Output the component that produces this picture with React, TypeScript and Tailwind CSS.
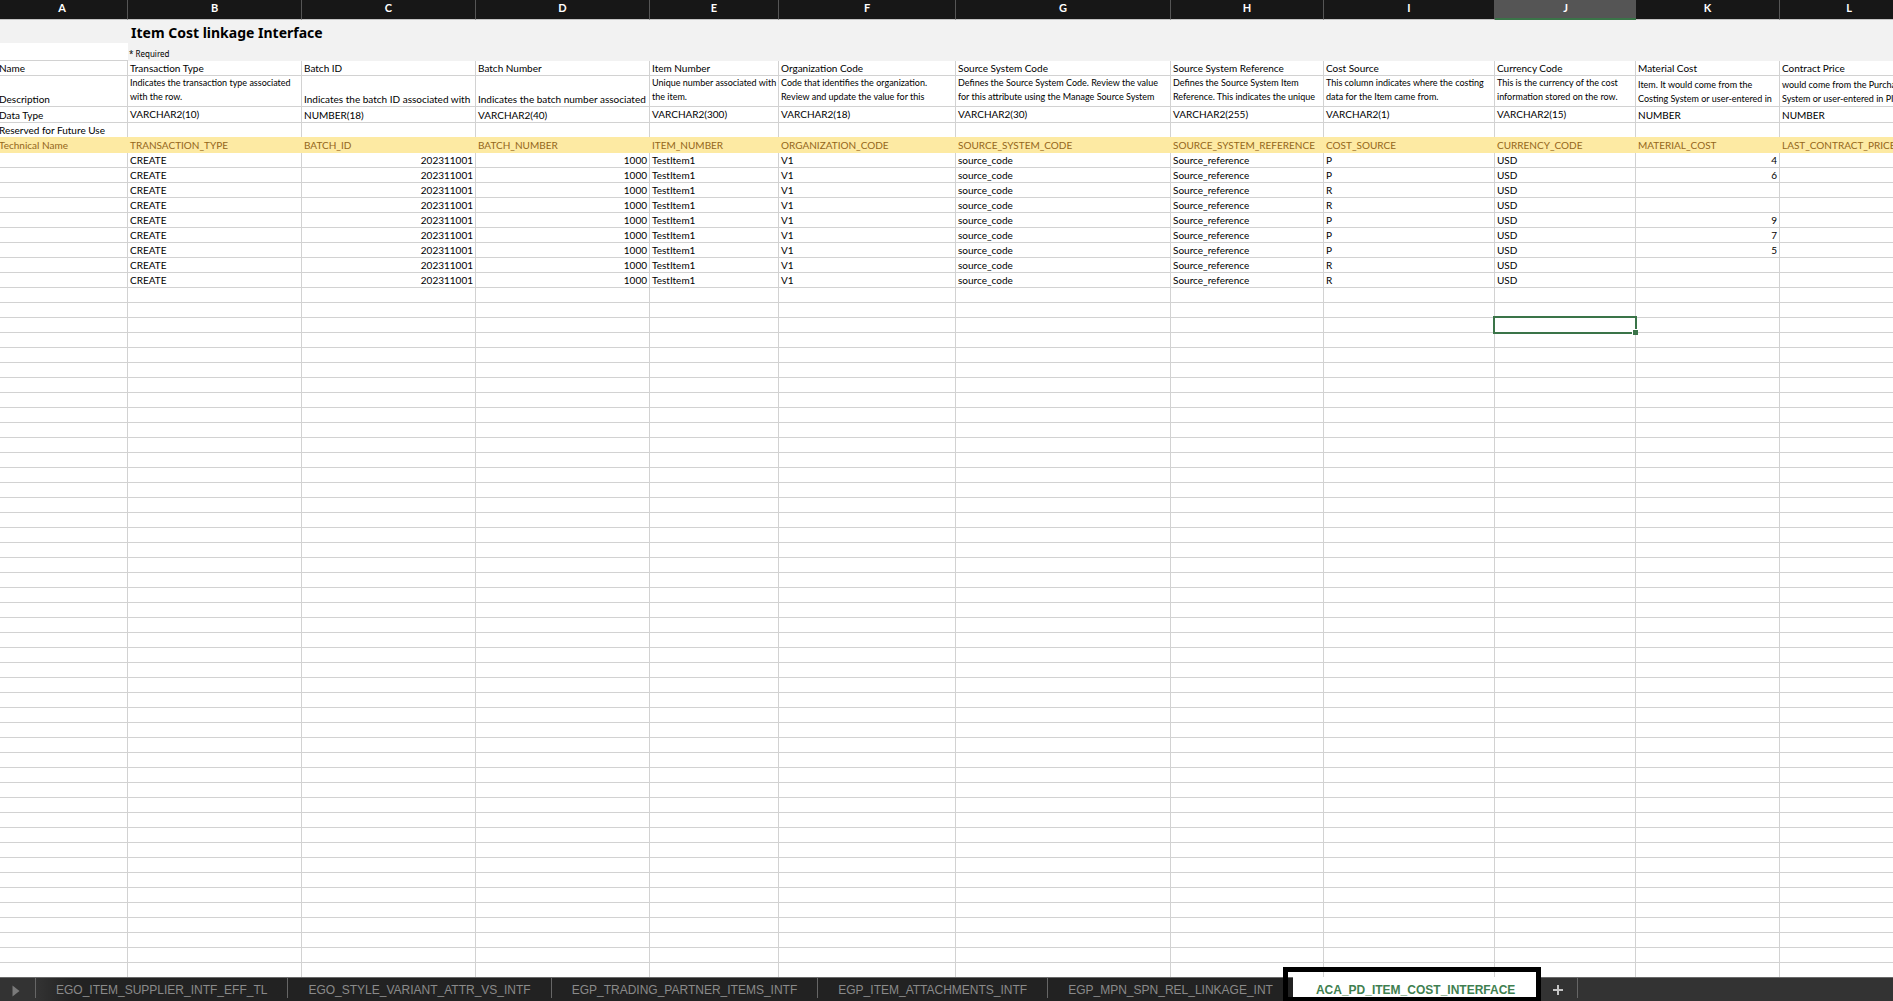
import React from 'react';
import clsx from 'clsx';

interface Column {
  letter: string;
  width: string;
  name: string;
  description: string[];
  dataType: string;
  technicalName: string;
  // how the wrapped text sits in its row
  descriptionStyle: 'wrapTop' | 'wrapBottom' | 'plain';
  typeAlign: 'top' | 'bottom';
}

const COLUMNS: Column[] = [
  { letter: 'A', width: 'w-[131px]', name: 'Name', description: ['Description'], dataType: 'Data Type', technicalName: 'Technical Name', descriptionStyle: 'plain', typeAlign: 'bottom' },
  { letter: 'B', width: 'w-[174px]', name: 'Transaction Type', description: ['Indicates the transaction type associated', 'with the row.'], dataType: 'VARCHAR2(10)', technicalName: 'TRANSACTION_TYPE', descriptionStyle: 'wrapTop', typeAlign: 'top' },
  { letter: 'C', width: 'w-[174px]', name: 'Batch ID', description: ['Indicates the batch ID associated with'], dataType: 'NUMBER(18)', technicalName: 'BATCH_ID', descriptionStyle: 'plain', typeAlign: 'bottom' },
  { letter: 'D', width: 'w-[174px]', name: 'Batch Number', description: ['Indicates the batch number associated'], dataType: 'VARCHAR2(40)', technicalName: 'BATCH_NUMBER', descriptionStyle: 'plain', typeAlign: 'bottom' },
  { letter: 'E', width: 'w-[129px]', name: 'Item Number', description: ['Unique number associated with', 'the item.'], dataType: 'VARCHAR2(300)', technicalName: 'ITEM_NUMBER', descriptionStyle: 'wrapTop', typeAlign: 'top' },
  { letter: 'F', width: 'w-[177px]', name: 'Organization Code', description: ['Code that identifies the organization.', 'Review and update the value for this'], dataType: 'VARCHAR2(18)', technicalName: 'ORGANIZATION_CODE', descriptionStyle: 'wrapTop', typeAlign: 'top' },
  { letter: 'G', width: 'w-[215px]', name: 'Source System Code', description: ['Defines the Source System Code. Review the value', 'for this attribute using the Manage Source System'], dataType: 'VARCHAR2(30)', technicalName: 'SOURCE_SYSTEM_CODE', descriptionStyle: 'wrapTop', typeAlign: 'top' },
  { letter: 'H', width: 'w-[153px]', name: 'Source System Reference', description: ['Defines the Source System Item', 'Reference. This indicates the unique'], dataType: 'VARCHAR2(255)', technicalName: 'SOURCE_SYSTEM_REFERENCE', descriptionStyle: 'wrapTop', typeAlign: 'top' },
  { letter: 'I', width: 'w-[171px]', name: 'Cost Source', description: ['This column indicates where the costing', 'data for the Item came from.'], dataType: 'VARCHAR2(1)', technicalName: 'COST_SOURCE', descriptionStyle: 'wrapTop', typeAlign: 'top' },
  { letter: 'J', width: 'w-[141px]', name: 'Currency Code', description: ['This is the currency of the cost', 'information stored on the row.'], dataType: 'VARCHAR2(15)', technicalName: 'CURRENCY_CODE', descriptionStyle: 'wrapTop', typeAlign: 'top' },
  { letter: 'K', width: 'w-[144px]', name: 'Material Cost', description: ['Item. It would come from the', 'Costing System or user-entered in'], dataType: 'NUMBER', technicalName: 'MATERIAL_COST', descriptionStyle: 'wrapBottom', typeAlign: 'bottom' },
  { letter: 'L', width: '', name: 'Contract Price', description: ['would come from the Purchasing', 'System or user-entered in PIM'], dataType: 'NUMBER', technicalName: 'LAST_CONTRACT_PRICE', descriptionStyle: 'wrapBottom', typeAlign: 'bottom' },
];

const makeRow = (source: string, cost: string) => [
  '', 'CREATE', '202311001', '1000', 'TestItem1', 'V1', 'source_code', 'Source_reference', source, 'USD', cost, '',
];

const ROWS = [
  makeRow('P', '4'),
  makeRow('P', '6'),
  makeRow('R', ''),
  makeRow('R', ''),
  makeRow('P', '9'),
  makeRow('P', '7'),
  makeRow('P', '5'),
  makeRow('R', ''),
  makeRow('R', ''),
];

const NUMERIC_COLUMNS = ['C', 'D', 'K'];
const EMPTY_ROWS = 100;
const SELECTED = { row: 2, letter: 'J' };

const TABS = [
  'EGO_ITEM_SUPPLIER_INTF_EFF_TL',
  'EGO_STYLE_VARIANT_ATTR_VS_INTF',
  'EGP_TRADING_PARTNER_ITEMS_INTF',
  'EGP_ITEM_ATTACHMENTS_INTF',
  'EGP_MPN_SPN_REL_LINKAGE_INT',
];

const GRID = 'border-b border-r border-[#d2d2d2]';
const TEXT = 'block overflow-hidden whitespace-nowrap px-[2px] text-[10px] leading-[14px]';

const ColumnHeaders: React.FC = () => (
  <thead>
    <tr>
      {COLUMNS.map(c => (
        <th
          key={c.letter}
          scope="col"
          className={clsx(
            'h-5 p-0 text-[11px] leading-4 font-bold text-white align-top',
            c.width,
            c.letter === SELECTED.letter
              ? 'bg-[#555555] border-b-2 border-[#3a7448]'
              : 'bg-[#171717] border-b border-r border-b-[#c4c4c4] border-r-[#555555]'
          )}
        >
          {c.letter}
        </th>
      ))}
    </tr>
  </thead>
);

const TitleRows: React.FC = () => (
  <>
    <tr className="bg-[#f2f2f2]">
      <td className="h-[23px] p-0"></td>
      <td colSpan={11} className="h-[23px] p-0 pt-[3px] pl-[3px] font-['Noto_Sans',sans-serif] text-sm leading-5 font-bold whitespace-nowrap">
        Item Cost linkage Interface
      </td>
    </tr>
    <tr>
      <td className="h-[18px] p-0 bg-white border-b border-[#d2d2d2]"></td>
      <td colSpan={11} className="h-[18px] p-0 pl-px bg-[#f2f2f2] align-bottom font-['Noto_Sans',sans-serif] text-[8px] leading-[14px]">
        * Required
      </td>
    </tr>
  </>
);

const DefinitionRows: React.FC = () => (
  <>
    <tr>
      {COLUMNS.map(c => (
        <td key={c.letter} className={clsx('h-[15px] p-0', GRID)}>
          <span className={TEXT}>{c.name}</span>
        </td>
      ))}
    </tr>
    <tr>
      {COLUMNS.map(c => (
        <td key={c.letter} className={clsx('h-[31px] p-0', GRID, c.descriptionStyle === 'wrapTop' ? 'align-top' : 'align-bottom')}>
          {c.descriptionStyle === 'plain' ? (
            <span className={TEXT}>{c.description[0]}</span>
          ) : (
            <div className="overflow-hidden whitespace-nowrap px-[2px] text-[9px] leading-[14px]">
              {c.description.map(line => (
                <div key={line}>{line}</div>
              ))}
            </div>
          )}
        </td>
      ))}
    </tr>
    <tr>
      {COLUMNS.map(c => (
        <td key={c.letter} className={clsx('h-4 p-0', GRID, c.typeAlign === 'top' ? 'align-top' : 'align-bottom')}>
          <span className={TEXT}>{c.dataType}</span>
        </td>
      ))}
    </tr>
    <tr>
      {COLUMNS.map(c => (
        <td key={c.letter} className="h-[14px] p-0 border-r border-[#d2d2d2]">
          {c.letter === 'A' && <span className={TEXT}>Reserved for Future Use</span>}
        </td>
      ))}
    </tr>
    <tr className="bg-[#fdeaa3] text-[#94661a]">
      {COLUMNS.map(c => (
        <td key={c.letter} className="h-4 p-0">
          <span className={TEXT}>{c.technicalName}</span>
        </td>
      ))}
    </tr>
  </>
);

const DataRows: React.FC = () => (
  <>
    {ROWS.map((row, r) => (
      <tr key={r}>
        {row.map((value, i) => (
          <td
            key={COLUMNS[i].letter}
            className={clsx('h-[15px] p-0', GRID, NUMERIC_COLUMNS.includes(COLUMNS[i].letter) && 'text-right')}
          >
            <span className={TEXT}>{value}</span>
          </td>
        ))}
      </tr>
    ))}
    {Array.from({ length: EMPTY_ROWS }, (_, r) => (
      <tr key={`empty-${r}`}>
        {COLUMNS.map(c => (
          <td key={c.letter} className={clsx('relative h-[15px] p-0', GRID)}>
            {r === SELECTED.row && c.letter === SELECTED.letter && (
              <div className="absolute -inset-[2px] z-10 border-2 border-[#3a7448]">
                <span className="absolute -right-[3px] -bottom-[3px] size-[6px] border-t border-l border-white bg-[#3a7448]"></span>
              </div>
            )}
          </td>
        ))}
      </tr>
    ))}
  </>
);

const SheetTabs: React.FC = () => (
  <nav aria-label="Sheets" className="flex h-6 shrink-0 border-t border-[#6a6a6a] bg-[#333333] font-['Liberation_Sans',Arial,sans-serif] text-[12px] leading-6 text-[#8a8a8a]">
    <button type="button" aria-label="Next sheets" className="flex w-9 shrink-0 items-center justify-center border-r border-[#666666] mb-[3px]">
      <svg width="8" height="12" viewBox="0 0 8 12" className="mt-[5px] ml-[-4px]">
        <path d="M0.5 0.5 L7.5 6 L0.5 11.5 Z" fill="#7a7a7a" />
      </svg>
    </button>
    {TABS.map((tab, i) => (
      <div
        key={tab}
        className={clsx('shrink-0 flex', i === 0 ? 'bg-linear-to-r from-[#333333] to-[#222222] to-15%' : 'bg-[#222222]')}
      >
        <button
          type="button"
          className={clsx('mb-[3px] h-5 px-5 whitespace-nowrap', i < TABS.length - 1 && 'border-r border-[#666666]')}
        >
          {tab}
        </button>
      </div>
    ))}
    <div className="relative -mt-px shrink-0 bg-white pt-px">
      <button type="button" aria-current="page" className="h-5 px-[23px] font-bold whitespace-nowrap text-[#3f7f50]">
        ACA_PD_ITEM_COST_INTERFACE
      </button>
      <div className="pointer-events-none absolute -top-[10px] -right-[3px] bottom-0 -left-[10px] border-[5px] border-b-4 border-black"></div>
    </div>
    <button type="button" aria-label="Add sheet" className="mb-[3px] flex w-10 shrink-0 items-center justify-center border-r border-[#666666]">
      <svg width="10" height="10" viewBox="0 0 10 10" className="mt-[3px]">
        <path d="M5 0 V10 M0 5 H10" stroke="#c4c4c4" strokeWidth="2" />
      </svg>
    </button>
  </nav>
);

export default function App() {
  return (
    <div className="flex h-screen flex-col overflow-hidden bg-white font-['Lato','Liberation_Sans',sans-serif] text-black">
      <main className="min-h-0 flex-1 overflow-hidden">
        <table className="-ml-[3px] w-full min-w-[1922px] table-fixed border-separate border-spacing-0">
          <ColumnHeaders />
          <tbody>
            <TitleRows />
            <DefinitionRows />
            <DataRows />
          </tbody>
        </table>
      </main>
      <SheetTabs />
    </div>
  );
}
